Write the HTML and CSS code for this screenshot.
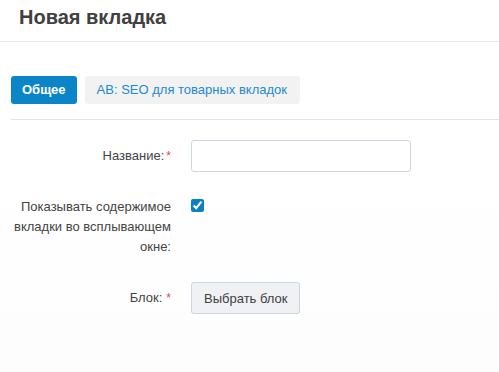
FILE: index.html
```html
<!DOCTYPE html>
<html lang="ru">
<head>
<meta charset="utf-8">
<link rel="stylesheet" href="styles.css">
</head>
<body>
<div class="page">
  <header class="header">
    <h1 class="title">Новая вкладка</h1>
  </header>
  <nav class="tabs">
    <span class="tab tab-active">Общее</span>
    <span class="tab">AB: SEO для товарных вкладок</span>
  </nav>
  <form class="form">
    <div class="row">
      <label class="label">Название:<span class="req">*</span></label>
      <div class="control"><input class="input" type="text"></div>
    </div>
    <div class="row">
      <label class="label">Показывать содержимое вкладки во всплывающем окне:</label>
      <div class="control"><input class="check" type="checkbox" checked></div>
    </div>
    <div class="row">
      <label class="label">Блок:<span class="req sp">*</span></label>
      <div class="control"><button class="btn" type="button">Выбрать блок</button></div>
    </div>
  </form>
</div>
</body>
</html>
```
FILE: styles.css
```css
html, body {
  margin: 0;
  height: 100%;
}
body {
  font-family: "Liberation Sans", Arial, sans-serif;
  font-size: 13px;
  color: #404040;
  background: linear-gradient(#ffffff 0, #ffffff 150px, #fdfdfd 372px);
}
.header {
  height: 42px;
  border-bottom: 1px solid #e9e9e9;
  padding: 0 19px;
  box-sizing: border-box;
}
.title {
  margin: 0;
  padding-top: 4px;
  font-size: 20px;
  line-height: 26px;
  font-weight: bold;
  color: #404040;
}
.tabs {
  margin: 34px 0 0 11px;
  padding-bottom: 15px;
  border-bottom: 1px solid #dfe4ea;
  display: flex;
  gap: 8px;
}
.tab {
  height: 28px;
  line-height: 28px;
  padding: 0 11px;
  border-radius: 3px;
  background: #f2f2f2;
  color: #1d8ad2;
}
.tab + .tab {
  padding: 0 13px 0 12px;
}
.tab-active {
  background: #0b85c8;
  color: #fff;
  font-weight: bold;
}
.form {
  padding-top: 20px;
  display: flex;
  flex-direction: column;
  gap: 19px;
}
.row {
  display: grid;
  grid-template-columns: 160px auto;
  column-gap: 20px;
  padding-left: 11px;
  align-items: start;
}
.label {
  text-align: right;
  line-height: 20px;
  padding: 6px 0;
  color: #444;
}
.req {
  color: #e8415e;
  margin-left: 2px;
  font-size: 12px;
}
.req.sp {
  margin-left: 4px;
}
.input {
  display: block;
  box-sizing: border-box;
  width: 220px;
  height: 32px;
  margin: 0;
  border: 1px solid #ccd6e0;
  border-radius: 3px;
  background: #fff;
}
.check {
  display: block;
  margin: 8px 0 0 0;
  width: 13px;
  height: 13px;
  accent-color: #0b7fc7;
}
.btn {
  display: block;
  height: 32px;
  box-sizing: border-box;
  padding: 0 12px;
  border: 1px solid #cdd5de;
  border-radius: 3px;
  background: #eff1f4;
  font-family: "Liberation Sans", Arial, sans-serif;
  font-size: 13px;
  color: #404040;
}
```
